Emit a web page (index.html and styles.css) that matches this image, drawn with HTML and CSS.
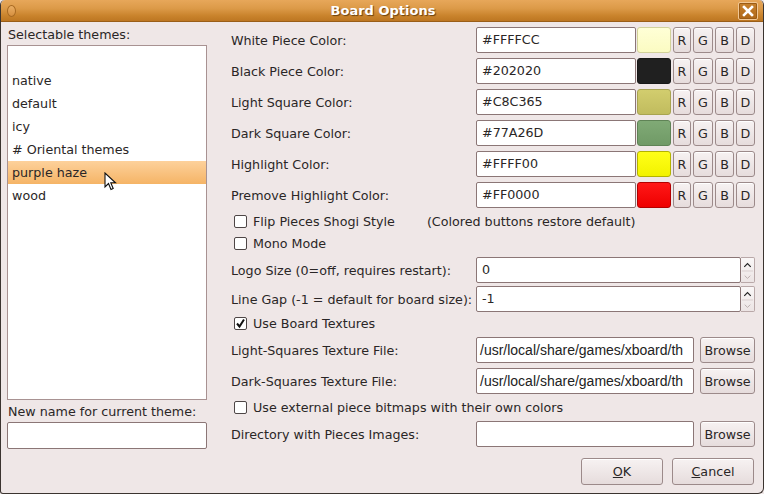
FILE: index.html
```
<!DOCTYPE html>
<html>
<head>
<meta charset="utf-8">
<link rel="stylesheet" href="styles.css">
</head>
<body>
<div class="window">
  <div class="titlebar">
    <span class="tb-icon"></span>
    <span class="title">Board Options</span>
    <span class="close"><svg width="12" height="12" viewBox="0 0 12 12"><path d="M2 2 L10 10 M10 2 L2 10" stroke="#fff" stroke-width="2.6" stroke-linecap="square"/></svg></span>
  </div>
  <div class="body">
    <div class="left">
      <div class="lbl lbl-top">Selectable themes:</div>
      <div class="list">
        <div class="item"></div>
        <div class="item">native</div>
        <div class="item">default</div>
        <div class="item">icy</div>
        <div class="item"># Oriental themes</div>
        <div class="item sel">purple haze</div>
        <div class="item">wood</div>
      </div>
      <div class="lbl lbl-new">New name for current theme:</div>
      <div class="entry new-entry"></div>
    </div>
    <div class="right">
      <div class="row color-row">
        <span class="label">White Piece Color:</span>
        <span class="entry c-entry">#FFFFCC</span>
        <span class="swatch sw-white"></span>
        <span class="btn b-r">R</span><span class="btn b-g">G</span><span class="btn b-b">B</span><span class="btn b-d">D</span>
      </div>
      <div class="row color-row">
        <span class="label">Black Piece Color:</span>
        <span class="entry c-entry">#202020</span>
        <span class="swatch sw-black"></span>
        <span class="btn b-r">R</span><span class="btn b-g">G</span><span class="btn b-b">B</span><span class="btn b-d">D</span>
      </div>
      <div class="row color-row">
        <span class="label">Light Square Color:</span>
        <span class="entry c-entry">#C8C365</span>
        <span class="swatch sw-light"></span>
        <span class="btn b-r">R</span><span class="btn b-g">G</span><span class="btn b-b">B</span><span class="btn b-d">D</span>
      </div>
      <div class="row color-row">
        <span class="label">Dark Square Color:</span>
        <span class="entry c-entry">#77A26D</span>
        <span class="swatch sw-dark"></span>
        <span class="btn b-r">R</span><span class="btn b-g">G</span><span class="btn b-b">B</span><span class="btn b-d">D</span>
      </div>
      <div class="row color-row">
        <span class="label">Highlight Color:</span>
        <span class="entry c-entry">#FFFF00</span>
        <span class="swatch sw-yellow"></span>
        <span class="btn b-r">R</span><span class="btn b-g">G</span><span class="btn b-b">B</span><span class="btn b-d">D</span>
      </div>
      <div class="row color-row">
        <span class="label">Premove Highlight Color:</span>
        <span class="entry c-entry">#FF0000</span>
        <span class="swatch sw-red"></span>
        <span class="btn b-r">R</span><span class="btn b-g">G</span><span class="btn b-b">B</span><span class="btn b-d">D</span>
      </div>
      <div class="row check-row flip-row">
        <span class="check"></span><span class="check-label">Flip Pieces Shogi Style</span>
        <span class="note">(Colored buttons restore default)</span>
      </div>
      <div class="row check-row">
        <span class="check"></span><span class="check-label">Mono Mode</span>
      </div>
      <div class="row spin-row logo-row">
        <span class="label">Logo Size (0=off, requires restart):</span>
        <span class="entry spin-entry">0</span>
        <span class="spin"><svg width="14" height="26" viewBox="0 0 14 26"><path d="M3.5 8.5 L7 5 L10.5 8.5" fill="none" stroke="#222" stroke-width="1.3"/><path d="M4 18 L7 21 L10 18" fill="none" stroke="#b8acac" stroke-width="1"/><path d="M1 13 H13" stroke="#d8cccc" stroke-width="1"/></svg></span>
      </div>
      <div class="row spin-row gap-row">
        <span class="label">Line Gap (-1 = default for board size):</span>
        <span class="entry spin-entry">-1</span>
        <span class="spin"><svg width="14" height="26" viewBox="0 0 14 26"><path d="M3.5 8.5 L7 5 L10.5 8.5" fill="none" stroke="#222" stroke-width="1.3"/><path d="M4 18 L7 21 L10 18" fill="none" stroke="#b8acac" stroke-width="1"/><path d="M1 13 H13" stroke="#d8cccc" stroke-width="1"/></svg></span>
      </div>
      <div class="row check-row tex-check">
        <span class="check checked"><svg width="11" height="11" viewBox="0 0 11 11"><path d="M2 5.5 L4.5 8.5 L9 1.5" fill="none" stroke="#111" stroke-width="2"/></svg></span><span class="check-label">Use Board Textures</span>
      </div>
      <div class="row file-row light-file">
        <span class="label">Light-Squares Texture File:</span>
        <span class="entry f-entry path">/usr/local/share/games/xboard/th</span>
        <span class="btn browse">Browse</span>
      </div>
      <div class="row file-row dark-file">
        <span class="label">Dark-Squares Texture File:</span>
        <span class="entry f-entry path">/usr/local/share/games/xboard/th</span>
        <span class="btn browse">Browse</span>
      </div>
      <div class="row check-row ext-check">
        <span class="check"></span><span class="check-label">Use external piece bitmaps with their own colors</span>
      </div>
      <div class="row file-row dir-row">
        <span class="label">Directory with Pieces Images:</span>
        <span class="entry f-entry"></span>
        <span class="btn browse">Browse</span>
      </div>
      <div class="row action-row">
        <span class="btn action"><u>O</u>K</span>
        <span class="btn action"><u>C</u>ancel</span>
      </div>
    </div>
  </div>
  <svg class="cursor" width="14" height="20" viewBox="0 0 14 20"><path d="M1 1 L1 15 L4.5 11.5 L7 17.5 L9.2 16.5 L6.8 10.8 L11.5 10.8 Z" fill="#fff" stroke="#111" stroke-width="1.1" stroke-linejoin="miter"/></svg>
</div>
</body>
</html>
```
FILE: styles.css
```
* { box-sizing: border-box; }
html, body { margin: 0; padding: 0; background: #efe7e7; }
body {
  width: 764px;
  height: 494px;
  overflow: hidden;
  font-family: "DejaVu Sans", "Liberation Sans", sans-serif;
  font-size: 12.7px;
  color: #2a2626;
}
.window {
  position: relative;
  width: 764px;
  height: 494px;
  background: #efe7e7;
  border-left: 1px solid #3b3430;
  border-right: 1px solid #3b3430;
  border-bottom: 1px solid #3b3430;
  border-radius: 5px 5px 6px 3px;
  overflow: hidden;
}
.titlebar {
  height: 22px;
  display: flex;
  align-items: center;
  justify-content: center;
  position: relative;
  background: linear-gradient(#e7a75a 0%, #dc9a48 40%, #c9832c 75%, #bd7622 100%);
  border-bottom: 1px solid #9a5e18;
  border-radius: 4px 4px 0 0;
}
.title {
  color: #fff;
  font-weight: bold;
  font-size: 13px;
  text-shadow: 1px 1px 1px #6a4010;
  margin-left: 2px;
}
.tb-icon {
  position: absolute;
  left: 6px;
  top: 5px;
  width: 9px;
  height: 12px;
  border-radius: 50%;
  border: 1px solid #a86a22;
  background: linear-gradient(#e9ad63, #d69040);
}
.close {
  position: absolute;
  right: 5px;
  top: 2px;
  width: 20px;
  height: 18px;
  border: 1px solid #f1c794;
  border-radius: 2px;
  background: linear-gradient(#c8822e, #b06818);
  display: flex;
  align-items: center;
  justify-content: center;
  box-shadow: inset 0 0 0 1px #9c5c14;
}
.body {
  display: flex;
  padding-left: 6px;
}
.left {
  width: 200px;
  display: flex;
  flex-direction: column;
}
.lbl { height: 16px; line-height: 16px; padding-left: 1px; }
.lbl-top { margin-top: 5px; }
.list {
  margin-top: 2px;
  height: 355px;
  background: #fff;
  border: 1px solid #a89292;
  padding-top: 0;
}
.item {
  height: 23px;
  line-height: 23px;
  padding-left: 4px;
}
.item.sel {
  background: linear-gradient(#fdd19b, #f5b466);
}
.lbl-new { margin-top: 4px; }
.entry {
  background: #fff;
  border: 1px solid #8b7676;
  border-radius: 2px;
  height: 26px;
  line-height: 24px;
  padding-left: 5px;
  white-space: nowrap;
  overflow: hidden;
}
.new-entry { margin-top: 2px; height: 27px; }
.right {
  margin-left: 24px;
  width: 525px;
  display: flex;
  flex-direction: column;
  padding-top: 5px;
}
.row {
  display: flex;
  align-items: center;
  height: 26px;
}
.label {
  width: 245px;
  white-space: nowrap;
}
.color-row { margin-bottom: 5px; }
.color-row:nth-child(6) { margin-bottom: 0; }
.c-entry { width: 160px; }
.swatch {
  width: 34px;
  height: 26px;
  margin-left: 1px;
  border-radius: 3px;
  border: 1px solid #666;
}
.sw-white { background: linear-gradient(#ffffd6, #fbfbc2); border-color: #d2d29a; }
.sw-black { background: #202020; border-color: #181818; }
.sw-light { background: linear-gradient(#d2cd6e, #c1bc5e); border-color: #a8a450; }
.sw-dark { background: linear-gradient(#80aa76, #709a66); border-color: #5f8356; }
.sw-yellow { background: linear-gradient(#ffff18, #f2f200); border-color: #b3b300; }
.sw-red { background: linear-gradient(#ff1818, #ee0000); border-color: #b30000; }
.btn {
  display: flex;
  align-items: center;
  justify-content: center;
  height: 26px;
  border: 1px solid #9c8a8a;
  border-radius: 3px;
  background: linear-gradient(#f7f2f2, #e6dcdc);
  color: #2a2626;
  box-shadow: inset 0 1px 0 #fff;
}
.b-r { width: 18px; margin-left: 2px; }
.b-g { width: 20px; margin-left: 2px; }
.b-b { width: 19px; margin-left: 2px; }
.b-d { width: 19px; margin-left: 2px; }
.check-row { height: 22px; }
.flip-row { margin-top: 2px; }
.check {
  width: 13px;
  height: 13px;
  margin-left: 3px;
  border: 1px solid #4e4646;
  border-radius: 2px;
  background: #fff;
  display: flex;
  align-items: center;
  justify-content: center;
}
.check-label { margin-left: 6px; }
.note { margin-left: 32px; }
.spin-entry { width: 265px; }
.spin {
  width: 14px;
  height: 26px;
  border: 1px solid #b9a8a8;
  border-left: none;
  border-radius: 0 2px 2px 0;
  background: linear-gradient(#faf7f7, #ece4e4);
  display: flex;
}
.logo-row { margin-top: 3px; }
.gap-row { margin-top: 3px; }
.tex-check { margin-top: 0; }
.f-entry { width: 218px; }
.path { font-family: "Liberation Sans", Arial, sans-serif; font-size: 14px; padding-left: 3px; color: #222; }
.browse { width: 55px; margin-left: 6px; }
.light-file { margin-top: 3px; }
.dark-file { margin-top: 5px; }
.ext-check { margin-top: 2px; }
.dir-row { margin-top: 3px; }
.action-row {
  margin-top: 11px;
  height: 27px;
  justify-content: flex-end;
  padding-right: 2px;
}
.action { width: 82px; height: 27px; margin-left: 9px; }
.action u { text-decoration: underline; }
.cursor {
  position: absolute;
  left: 103px;
  top: 172px;
}
```
